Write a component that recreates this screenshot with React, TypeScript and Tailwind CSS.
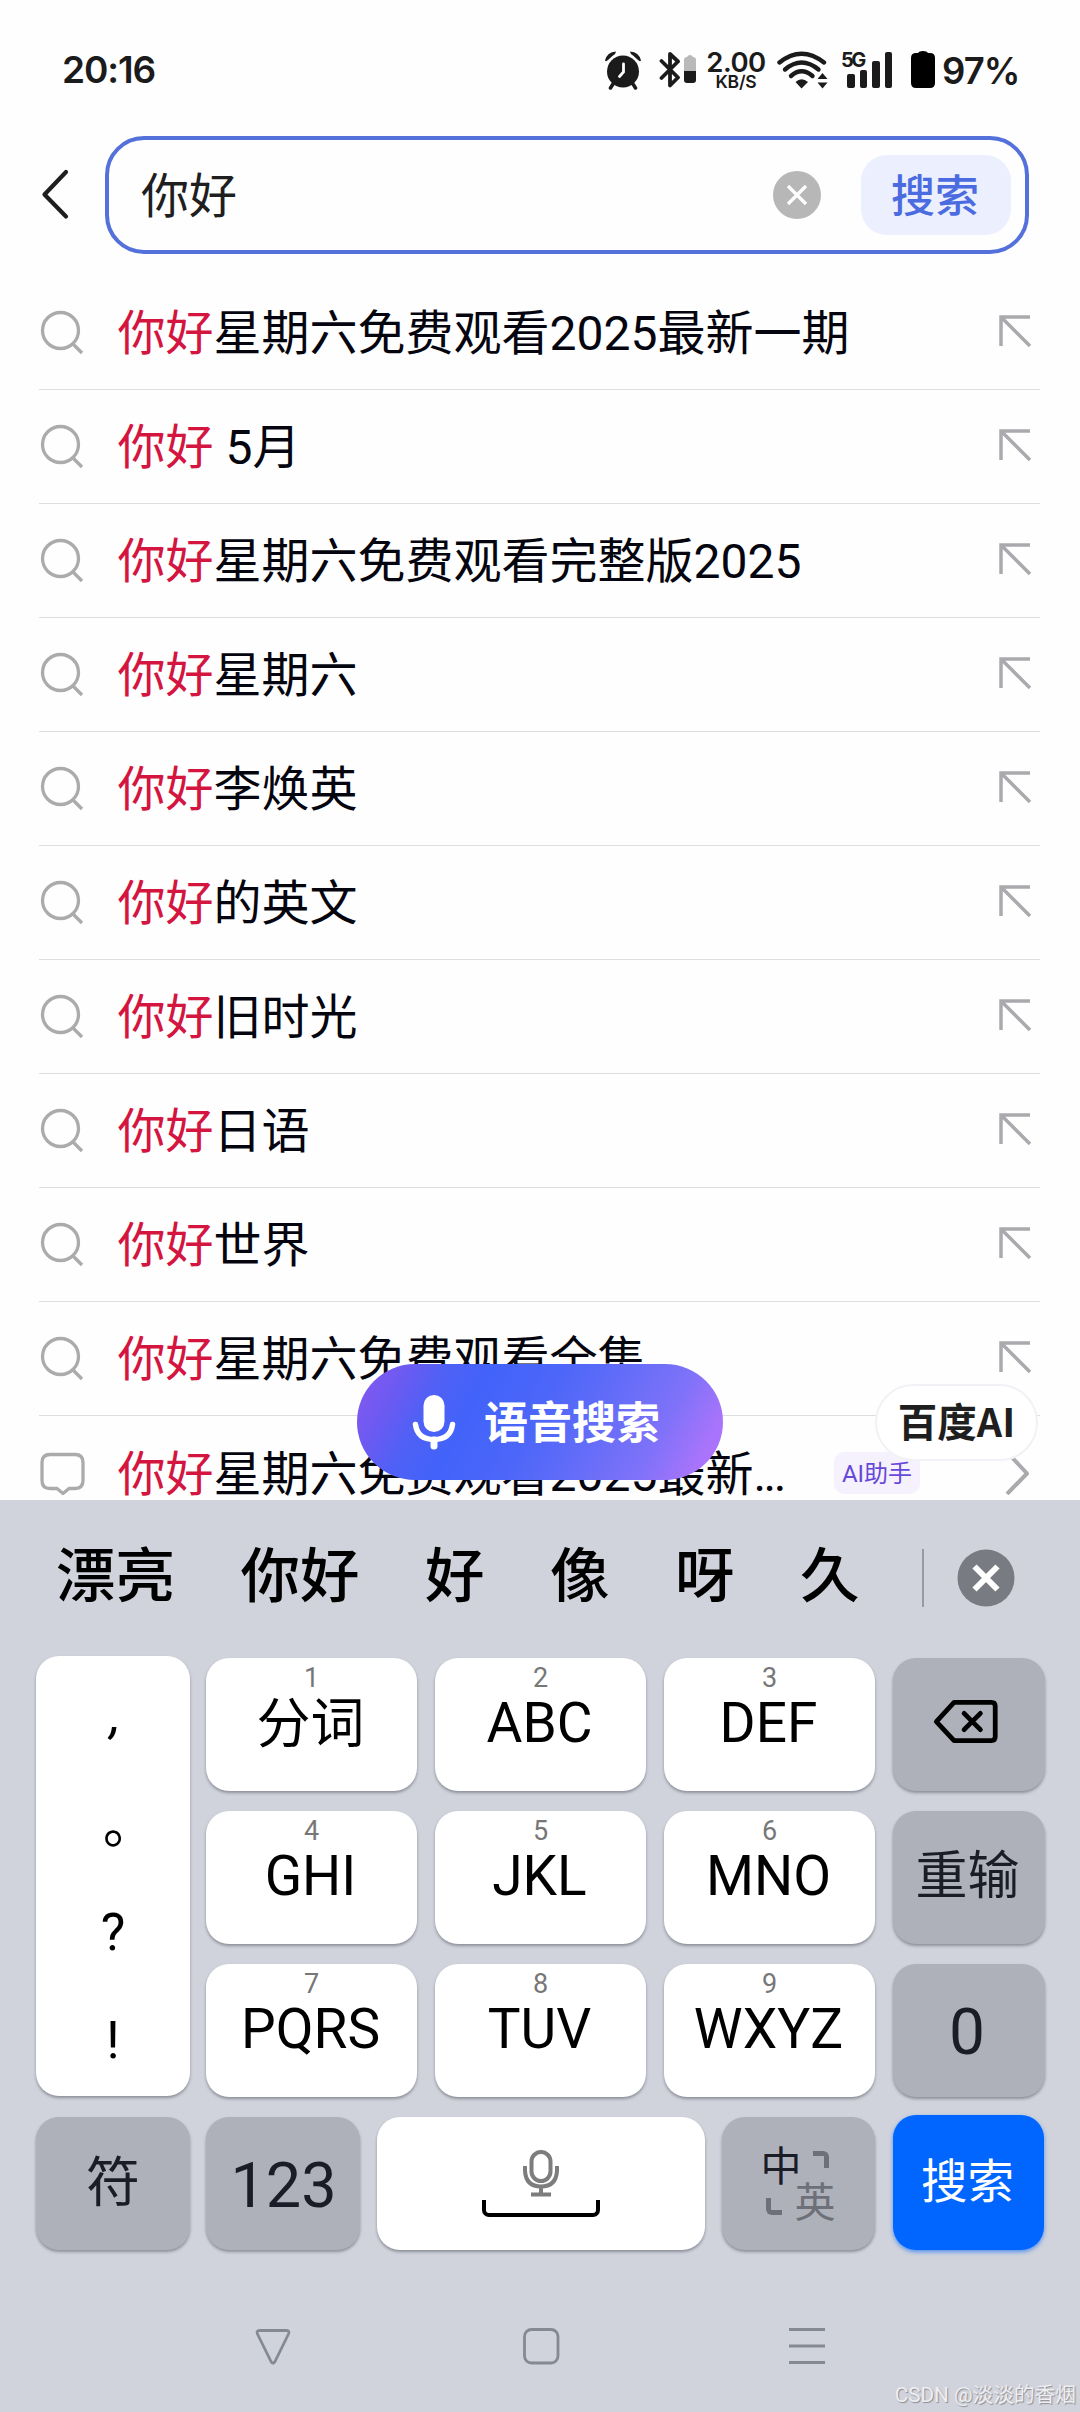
import React from "react";

const suggestions = [
  "星期六免费观看2025最新一期",
  " 5月",
  "星期六免费观看完整版2025",
  "星期六",
  "李焕英",
  "的英文",
  "旧时光",
  "日语",
  "世界",
  "星期六免费观看全集",
];

const candidates = ["漂亮", "你好", "好", "像", "呀", "久"];

const letterKeys = [
  ["1", "分词"],
  ["2", "ABC"],
  ["3", "DEF"],
  ["4", "GHI"],
  ["5", "JKL"],
  ["6", "MNO"],
  ["7", "PQRS"],
  ["8", "TUV"],
  ["9", "WXYZ"],
];

const keyShadow = "rounded-[23px] shadow-[0_2px_3px_rgba(60,62,75,0.45)]";
const darkKey = "flex items-center justify-center bg-[#aeb1ba] text-[#1a1c27] " + keyShadow;

function StatusBar() {
  return (
    <div className="flex h-[136px] items-start pl-[62px] pt-[50px] font-['Inter',sans-serif] text-[#1b1b1b]">
      <div className="mt-[1px] text-[37px] font-semibold leading-[38px] tracking-[-1.1px]">20:16</div>
      <svg className="ml-auto shrink-0" width="38" height="40" viewBox="0 0 38 40" fill="none">
        <circle cx="19" cy="21.5" r="16" fill="#1b1b1b" />
        <path d="M1 10.5Q3 2 12 1.5Q12 3.500 9 5.500L4 10Q2 12 1 10.500ZM37 10.500Q35 2 26 1.500Q26 3.500 29 5.500L34 10Q36 12 37 10.500Z" fill="#1b1b1b" />
        <path d="M9 34l-2.500 4M29 34l2.500 4" stroke="#1b1b1b" strokeWidth="3.500" strokeLinecap="round" />
        <path d="M19.500 14v8l-4 4.500" stroke="#fff" strokeWidth="2.800" strokeLinecap="round" />
      </svg>
      <svg className="ml-[17px] shrink-0" width="38" height="40" viewBox="0 0 38 40" fill="none">
        <path d="M2.500 11L19 27.500 11 35.500V4l8 7.500L2.500 28" stroke="#1b1b1b" strokeWidth="3.800" strokeLinejoin="round" strokeLinecap="round" />
        <path d="M25 21V10q0-3 3-3 1-2 3-2t3 2q3 0 3 3v11z" fill="#b9b9b9" />
        <path d="M25 21h12v9q0 3-3 3h-6q-3 0-3-3z" fill="#1b1b1b" />
      </svg>
      <div className="ml-[9px] flex w-[60px] flex-col items-center font-semibold">
        <div className="text-[27.500px] leading-[24px] tracking-[-0.5px]">2.00</div>
        <div className="mt-[1px] text-[17.500px] leading-[14px] tracking-[-0.2px]">KB/S</div>
      </div>
      <svg className="ml-[11px] shrink-0" width="52" height="40" viewBox="0 0 52 40" fill="none">
        <g stroke="#1b1b1b" strokeWidth="4.400" strokeLinecap="round">
          <path d="M2.500 12.500Q24.500-5 47 12.500" />
          <path d="M8 19.500Q24.500 5.500 41.500 19.500" />
          <path d="M14 26Q24.500 16.500 35.500 26" />
        </g>
        <path d="M18.500 32Q24.500 26.500 31 32L24.500 38.500z" fill="#1b1b1b" />
        <path d="M40.500 29l5-6 5 6zM40.500 32.500l5 6 5-6z" fill="#1b1b1b" />
      </svg>
      <div className="relative ml-[12px] flex h-[38px] w-[53px] items-end">
        <span className="absolute left-0 top-[1px] text-[20px] font-bold leading-[18px] tracking-[-2.5px]">5G</span>
        <div className="ml-[6px] flex items-end gap-[5px]">
          <i className="h-[14px] w-[7.500px] rounded-[2px] bg-[#1b1b1b]" />
          <i className="h-[18px] w-[7.500px] rounded-[2px] bg-[#1b1b1b]" />
          <i className="h-[27px] w-[7.500px] rounded-[2px] bg-[#1b1b1b]" />
          <i className="h-[36px] w-[7.500px] rounded-[2px] bg-[#1b1b1b]" />
        </div>
      </div>
      <svg className="ml-[16px] shrink-0" width="26" height="40" viewBox="0 0 26 40">
        <path d="M1 8q0-5 5-5h2q1-2 5-2t5 2h2q5 0 5 5v25q0 5-5 5H6q-5 0-5-5z" fill="#000" />
      </svg>
      <div className="ml-[6px] mr-[61px] mt-[2px] w-[77px] whitespace-nowrap text-[36.500px] font-semibold leading-[38px] tracking-[-0.9px]">97%</div>
    </div>
  );
}

function SearchHeader() {
  return (
    <div className="flex h-[118px] items-center pl-[40px]">
      <svg width="30" height="54" viewBox="0 0 30 54" fill="none">
        <path d="M26 4L4.500 26.500l21.500 22" stroke="#1f1f1f" strokeWidth="4.200" strokeLinecap="round" strokeLinejoin="round" />
      </svg>
      <div className="ml-[35px] flex h-[118px] w-[924px] items-center rounded-[39px] border-4 border-[#5470db] pl-[32px] pr-[14px]">
        <div className="pt-[4px] text-[48px] leading-none text-[#1f1f1f]">你好</div>
        <svg className="ml-auto" width="48" height="48" viewBox="0 0 48 48" fill="none">
          <circle cx="24" cy="24" r="24" fill="#b7b7b7" />
          <path d="M15 15l18 18M33 15L15 33" stroke="#fff" strokeWidth="3.200" />
        </svg>
        <div className="ml-[40px] flex h-[80px] w-[150px] items-center justify-center rounded-[26px] bg-[#eceffd] pr-[2px] pt-[4px] text-[44px] font-medium leading-none text-[#4b6be0]">
          搜索
        </div>
      </div>
    </div>
  );
}

function SuggestionRow({ rest }: { rest: string }) {
  return (
    <div className="flex h-[114px] items-center border-b border-[#dedede]">
      <svg className="-mt-[2px] shrink-0" width="48" height="48" viewBox="0 0 48 48" fill="none" stroke="#ababab" strokeWidth="3.300">
        <circle cx="21.500" cy="22.500" r="18" />
        <path d="M34 36l9 9" />
      </svg>
      <div className="ml-[30.500px] whitespace-pre pt-[3px] text-[48px] leading-none text-[#05050f]">
        <span className="text-[#d3153f]">你好</span>
        {rest}
      </div>
      <svg className="-mt-[3px] ml-auto mr-[8px] shrink-0" width="36" height="36" viewBox="0 0 36 36" fill="none" stroke="#aaaaae" strokeWidth="3.500">
        <path d="M34 4H5v29M5 4l29 29" />
      </svg>
    </div>
  );
}

function Suggestions() {
  return (
    <div className="mt-[22px] h-[1224px] overflow-hidden pl-[39px] pr-[40px]">
      {suggestions.map((s) => (
        <SuggestionRow key={s} rest={s} />
      ))}
      <div className="flex h-[114px] items-center">
        <svg className="-mt-[2px] shrink-0" width="48" height="48" viewBox="0 0 48 48" fill="none" stroke="#ababab" strokeWidth="3.300" strokeLinejoin="round">
          <path d="M11 6.500h25q8 0 8 8v18q0 8-8 8h-6l-6 5-6-5h-7q-8 0-8-8v-18q0-8 8-8z" />
        </svg>
        <div className="ml-[30.500px] pt-[3px] text-[48px] leading-none text-[#05050f]">
          <span className="text-[#d3153f]">你好</span>星期六免费观看2025最新<span className="tracking-[-2.500px]">...</span>
        </div>
        <div className="ml-auto flex h-[42px] w-[86px] items-center justify-center rounded-[10px] bg-[#f5f2fe] pt-[2px] text-[24px] leading-none text-[#6848d8]">
          AI助手
        </div>
        <svg className="ml-[83px] mr-[9px] shrink-0" width="28" height="44" viewBox="0 0 28 44" fill="none">
          <path d="M4 1l20 21.500L4 43" stroke="#aaaaae" strokeWidth="4" strokeLinejoin="round" />
        </svg>
      </div>
    </div>
  );
}

function FloatingActions() {
  return (
    <>
      <div className="absolute left-[357px] top-[1364px] flex h-[116px] w-[366px] items-center rounded-full bg-[linear-gradient(118deg,#8a58ee_0%,#6c5af2_12%,#5060f5_21%,#4263f9_32%,#4c66f9_48%,#606cf8_62%,#8072f9_80%,#a874fb_92%,#b072fb_100%)] pl-[54px]">
        <svg width="46" height="56" viewBox="0 0 46 56" fill="none">
          <rect x="12.500" y="1" width="21" height="37" rx="10.500" fill="#fff" />
          <path d="M4.500 30.500q2 15 18.500 15t18.500-15" stroke="#fff" strokeWidth="5.500" strokeLinecap="round" />
          <path d="M23 46v6" stroke="#fff" strokeWidth="7" strokeLinecap="round" />
        </svg>
        <span className="ml-[27px] pt-[4px] text-[44px] font-bold leading-none text-white">语音搜索</span>
      </div>
      <div className="absolute left-[875px] top-[1384px] flex h-[77px] w-[163px] items-center justify-center rounded-full border-2 border-[#f1f1f6] bg-white pb-[5px] font-['Noto_Sans_CJK_SC',sans-serif] text-[39.500px] font-bold leading-none text-[#1f1f1f]">
        百度AI
      </div>
    </>
  );
}

function CandidateBar() {
  return (
    <div className="flex h-[156px] items-center pl-[56px]">
      <div className="flex gap-[65.500px] text-[59.500px] font-medium leading-none text-black">
        {candidates.map((c) => (
          <span key={c}>{c}</span>
        ))}
      </div>
      <div className="ml-[62px] h-[58px] w-[2px] bg-[#969aa4]" />
      <svg className="ml-[33px]" width="58" height="58" viewBox="0 0 58 58" fill="none">
        <circle cx="29" cy="29" r="28.500" fill="#787b81" />
        <path d="M17.500 17.500l23 23M40.500 17.500l-23 23" stroke="#fff" strokeWidth="6" />
      </svg>
    </div>
  );
}

function Keyboard() {
  return (
    <div className="h-[912px] bg-[#d0d3db]">
      <CandidateBar />
      <div className="flex gap-[17px] pl-[36px]">
        <div className={"flex h-[440px] w-[154px] flex-col items-center bg-white text-[52px] leading-none text-black " + keyShadow}>
          <span className="ml-[5px] mt-[34px] italic">,</span>
          <span className="relative left-[16px] mt-[58px]">。</span>
          <span className="mt-[55px]">?</span>
          <span className="mt-[56px]">!</span>
        </div>
        <div className="-ml-px mt-[2px] grid grid-cols-[repeat(3,211px)] grid-rows-[repeat(3,133px)] gap-x-[18px] gap-y-[20px]">
          {letterKeys.map(([n, label]) => (
            <div key={n} className={"flex flex-col items-center bg-white " + keyShadow}>
              <span className="mt-[7px] text-[27px] leading-[26px] text-[#777777]">{n}</span>
              <span className={n === "1" ? "-ml-[2px] mt-[7px] text-[54px] leading-[54px] text-black" : "-ml-[2px] mt-[5px] text-[55px] leading-[54px] text-black"}>
                {label}
              </span>
            </div>
          ))}
        </div>
        <div className="ml-px mt-[2px] grid grid-cols-[152px] grid-rows-[repeat(3,133px)] gap-y-[20px]">
          <div className={darkKey}>
            <svg className="-ml-[5px] -mt-[5px]" width="67" height="46" viewBox="0 0 70 48" fill="none" stroke="#000" strokeLinejoin="round" strokeLinecap="round">
              <path d="M22 3.500h39q4 0 4 4v32q0 4-4 4H22L3.500 23.500z" strokeWidth="5" />
              <path d="M32.500 15l17 17M49.500 15l-17 17" strokeWidth="5" />
            </svg>
          </div>
          <div className={darkKey + " pb-[2px] pr-[3px] text-[52px] leading-none"}>重输</div>
          <div className={darkKey + " pr-[4px] pt-[4px] text-[64px] leading-none"}>0</div>
        </div>
      </div>
      <div className="mt-[18px] flex h-[135px] items-end pl-[36px]">
        <div className={darkKey + " h-[133px] w-[154px] text-[54px] leading-none"}>符</div>
        <div className={darkKey + " ml-[16px] h-[133px] w-[154px] pl-[1px] pt-[3px] text-[63px] leading-none"}>123</div>
        <div className={"ml-[17px] flex h-[133px] w-[328px] flex-col items-center bg-white pt-[32px] " + keyShadow}>
          <svg width="38" height="48" viewBox="0 0 38 48" fill="none" stroke="#7d7d7d" strokeWidth="4">
            <rect x="9.500" y="3" width="19" height="29" rx="9.500" />
            <path d="M3 17v5q1 15.500 16 15.500T35 22v-5M19 37v9M9 45.500h20" />
          </svg>
          <div className="mt-[3px] h-[17px] w-[118px] rounded-b-[7px] border-x-4 border-b-4 border-black" />
        </div>
        <div className={"ml-[17px] grid h-[133px] w-[153px] grid-cols-[36px_36px] grid-rows-[36px_36px] place-content-center bg-[#aeb1ba] pt-[2px] text-[41px] leading-[36px] " + keyShadow}>
          <span className="-ml-[2px] text-[#1a1c27]">中</span>
          <i className="ml-[14px] mt-[2px] h-[17px] w-[16px] rounded-tr-[6px] border-r-[5px] border-t-[5px] border-[#6d7078]" />
          <i className="ml-[3px] mt-[13px] h-[17px] w-[16px] rounded-bl-[6px] border-b-[5px] border-l-[5px] border-[#6d7078]" />
          <span className="-ml-[4px] text-[#6d7078]">英</span>
        </div>
        <div className="ml-[18px] flex h-[135px] w-[151px] items-center justify-center rounded-[23px] bg-[#0066ff] pr-[2px] text-[46.500px] leading-none text-white shadow-[0_2px_4px_rgba(0,102,255,0.6)]">
          搜索
        </div>
      </div>
      <div className="mt-[76px] flex items-center pl-[253px] text-[#858992]">
        <svg width="40" height="40" viewBox="0 0 40 40" fill="none" stroke="currentColor" strokeWidth="2.800" strokeLinejoin="round">
          <path d="M6.500 4.500h27q3.500 0 2 3.500L22 35.500q-2 3.500-4 0L4.500 8q-1.500-3.500 2-3.500z" />
        </svg>
        <svg className="ml-[228px]" width="40" height="40" viewBox="0 0 40 40" fill="none" stroke="currentColor" strokeWidth="2.800">
          <rect x="3.500" y="3.500" width="33.500" height="33.500" rx="7" />
        </svg>
        <svg className="ml-[226px]" width="40" height="40" viewBox="0 0 40 40" fill="none" stroke="currentColor" strokeWidth="3">
          <path d="M2 3.500h36M2 20h36M2 36.500h36" />
        </svg>
      </div>
    </div>
  );
}

export default function App() {
  return (
    <div className="relative h-[2412px] w-[1080px] overflow-hidden bg-[#fefefe] font-['Roboto','Noto_Sans_CJK_SC',sans-serif]">
      <StatusBar />
      <SearchHeader />
      <Suggestions />
      <Keyboard />
      <FloatingActions />
      <div className="absolute bottom-[6px] right-[4px] whitespace-nowrap text-[20.700px] leading-none text-[#eeeef2] [text-shadow:1px_1px_1px_#8a8c92]">
        CSDN @淡淡的香烟
      </div>
    </div>
  );
}
